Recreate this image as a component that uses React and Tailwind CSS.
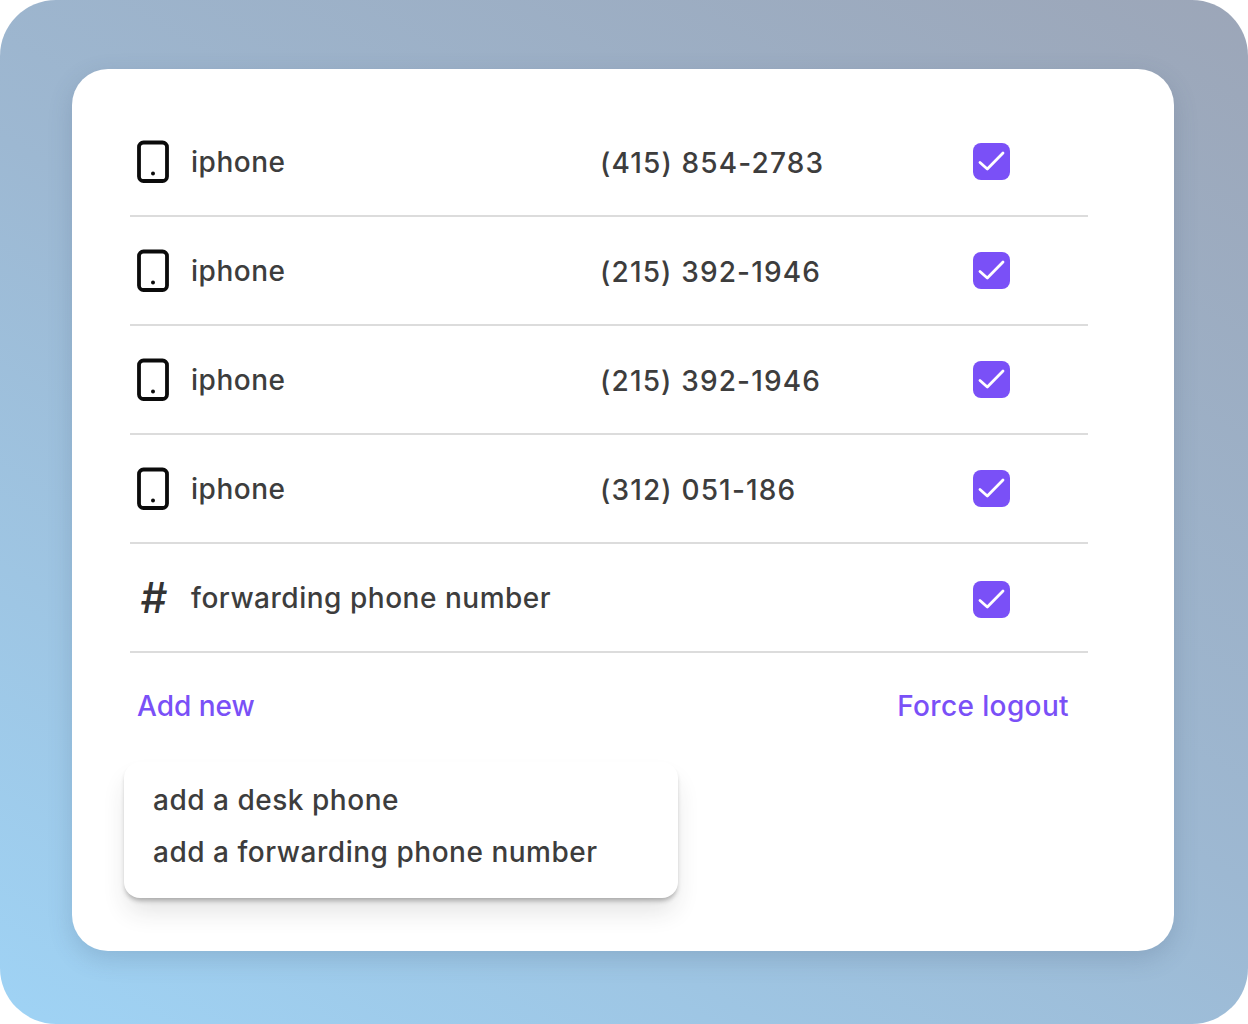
const rows = [
  { label: "iphone", phone: "(415) 854-2783" },
  { label: "iphone", phone: "(215) 392-1946" },
  { label: "iphone", phone: "(215) 392-1946" },
  { label: "iphone", phone: "(312) 051-186" },
];

function PhoneIcon() {
  return (
    <svg width="32" height="43" viewBox="0 0 32 43" fill="none" className="block">
      <rect x="2" y="2.5" width="28" height="38.5" rx="4.5" stroke="#0b0b0b" strokeWidth="3.8" />
      <circle cx="16" cy="33.5" r="2" fill="#0b0b0b" />
    </svg>
  );
}

function Check({ nudge }) {
  return (
    <div className={nudge ? "mt-[4px] flex h-[37px] w-[37px] items-center justify-center rounded-[8px] bg-[#7a50f7]" : "flex h-[37px] w-[37px] items-center justify-center rounded-[8px] bg-[#7a50f7]"}>
      <svg width="37" height="37" viewBox="0 0 37 37" fill="none">
        <path d="M7 19.5L14.3 26L30 10" stroke="white" strokeWidth="2.8" strokeLinecap="round" strokeLinejoin="round" />
      </svg>
    </div>
  );
}

function Row({ icon, label, phone, nudge }) {
  return (
    <div className="flex h-[109px] items-center border-b-2 border-[#dcdcdc]">
      <div className="flex w-[61px] shrink-0 justify-start pl-[7px]">{icon}</div>
      <div className="w-[409px] shrink-0 whitespace-nowrap tracking-[0.52px]">{label}</div>
      <div className="w-[373px] shrink-0 whitespace-nowrap pt-[2px] tracking-[1.15px]">{phone}</div>
      <Check nudge={nudge} />
    </div>
  );
}

export default function App() {
  return (
    <div className="h-[1024px] w-[1248px] bg-white">
      <div
        className="h-[1024px] w-[1248px] rounded-[56px] bg-[linear-gradient(211deg,#9ca6b8_0%,#9db8d2_50%,#9fd3f5_100%)] pl-[72px] pt-[69px]"
        style={{ fontFamily: "Inter, sans-serif" }}
      >
        <div className="h-[882px] w-[1102px] rounded-[36px] bg-white pl-[58px] pt-[39px] shadow-[0_8px_24px_rgba(60,80,110,0.2)]">
          <div className="w-[958px] text-[28px] font-medium leading-[34px] text-[#3d3d3d]">
            {rows.map((r, i) => (
              <Row key={i} icon={<PhoneIcon />} label={r.label} phone={r.phone} />
            ))}
            <Row
              icon={<span className="ml-[3px] text-[42px] font-medium italic leading-none text-[#333333]">#</span>}
              label="forwarding phone number"
              phone=""
              nudge
            />
            <div className="flex justify-between pl-[7px] pr-[19px] pt-[36px] text-[#7a50f7]">
              <span className="tracking-[0px]">Add new</span>
              <span className="tracking-[0.37px]">Force logout</span>
            </div>
            <div className="-ml-[6px] mt-[39px] h-[136px] w-[554px] rounded-[16px] bg-white pl-[29px] pt-[21px] tracking-[0.52px] shadow-[0_4px_4px_-1px_rgba(40,40,40,0.3),0_16px_26px_-4px_rgba(40,40,40,0.14)]">
              <div>add a desk phone</div>
              <div className="mt-[18px]">add a forwarding phone number</div>
            </div>
          </div>
        </div>
      </div>
    </div>
  );
}
